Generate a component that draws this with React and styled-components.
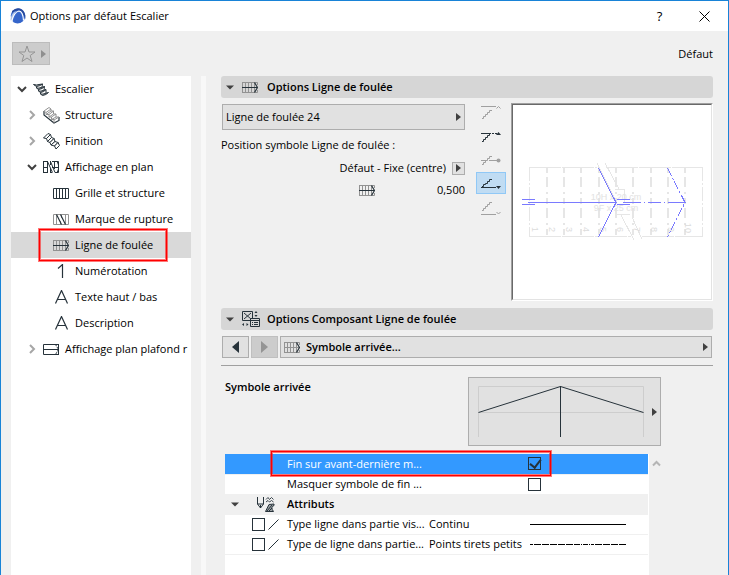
import { useState } from 'react';
import styled, { createGlobalStyle, css } from 'styled-components';

const GlobalStyle = createGlobalStyle`
  * { box-sizing: border-box; }
  body {
    margin: 0;
    background: #f0f0f0;
  }
  body, button, input, select {
    font-family: "Open Sans", "Noto Sans", sans-serif;
    font-size: 11px;
    line-height: 16px;
    color: #000;
  }
  button, input, select {
    margin: 0;
    padding: 0;
  }
  svg { display: block; flex: none; }
`;

const Dialog = styled.div`
  display: flex;
  flex-direction: column;
  min-height: 100vh;
  border: 1px solid #1883d7;
  border-bottom: none;
  background: #f0f0f0;
`;

const TitleBar = styled.header`
  display: flex;
  align-items: center;
  height: 30px;
  padding: 0 16px 0 9px;
  background: #fff;
`;

const Title = styled.h1`
  flex: 1;
  margin: 0 0 0 4px;
  font-size: 11px;
  font-weight: 400;
`;

const TitleButton = styled.button`
  display: flex;
  align-items: center;
  justify-content: center;
  width: 15px;
  height: 20px;
  margin-left: 30px;
  border: none;
  background: none;
  font-size: 13px;
`;

const Toolbar = styled.div`
  display: flex;
  align-items: center;
  justify-content: space-between;
  height: 45px;
  padding: 0 15px 0 11px;
`;

const FavoriteButton = styled.button`
  display: flex;
  align-items: center;
  justify-content: space-between;
  width: 38px;
  height: 23px;
  padding: 0 3px 0 5px;
  border: 1px solid #bcbcbc;
  background: #cccccc;
`;

const Main = styled.div`
  display: flex;
  flex: 1;
  padding: 0 15px 0 10px;
`;

const Sidebar = styled.nav`
  width: 180px;
  overflow: hidden;
  background: #fff;
`;

const Splitter = styled.div`
  width: 5px;
  margin: 0 15px 0 10px;
  background: #f8f8f8;
`;

const Tree = styled.ul`
  margin: 0;
  padding: 0;
  list-style: none;
`;

const TreeRow = styled.li`
  position: relative;
  height: 26px;
  padding-left: ${(p) => 6 + p.$level * 10}px;
  background: ${(p) => (p.$selected ? '#d9d9d9' : 'transparent')};
`;

const TreeButton = styled.button`
  display: flex;
  align-items: center;
  height: 26px;
  border: none;
  background: none;
  white-space: nowrap;
`;

const TreeCaret = styled.span`
  width: 16px;
`;

const TreeIcon = styled.span`
  display: flex;
  width: 22px;
`;

const Callout = styled.span`
  position: absolute;
  border: 1px solid #f00;
  box-shadow: 0 0 0 1px rgba(255, 30, 30, 0.6), inset 0 0 0 1px rgba(255, 30, 30, 0.6);
  pointer-events: none;
`;

const TreeCallout = styled(Callout)`
  z-index: 1;
  top: -3px;
  left: 28px;
  width: 128px;
  height: 32px;
`;

const RowCallout = styled(Callout)`
  top: -3px;
  left: 46px;
  width: 280px;
  height: 25px;
`;

const Content = styled.main`
  display: flex;
  flex: 1;
  flex-direction: column;
  min-width: 0;
`;

const SectionHeader = styled.h2`
  margin: 0;
  border-radius: 3px;
  background: #d6d6d6;
  font-size: 11px;
  font-weight: 600;
`;

const SectionToggle = styled.button`
  display: flex;
  align-items: center;
  width: 100%;
  height: 22px;
  padding-left: 5px;
  border: none;
  background: none;
  font-weight: inherit;
`;

const SectionIcon = styled.span`
  display: flex;
  width: 25px;
  margin-left: 8px;
`;

const LinePanel = styled.div`
  display: flex;
  padding: 5px 0 7px;
`;

const Settings = styled.div`
  display: flex;
  flex: 1;
  flex-direction: column;
  margin-right: 11px;
  min-width: 0;
`;

const DropDown = styled.div`
  display: flex;
  flex: ${(p) => (p.$tall ? 'none' : '1')};
  align-items: center;
  height: ${(p) => (p.$tall ? 26 : 22)}px;
  margin: ${(p) => (p.$tall ? '1px 0 0 1px' : '0')};
  padding: 0 3px;
  border: 1px solid #adadad;
  background: #e1e1e1;

  select {
    flex: 1;
    min-width: 0;
    border: none;
    background: none;
    appearance: none;
    outline: none;
    font-weight: ${(p) => (p.$tall ? 400 : 600)};
  }

  svg + select {
    padding-left: 6px;
  }
`;

const Caption = styled.p`
  margin: 7px 0;
`;

const SettingRow = styled.div`
  display: flex;
  align-items: center;
  justify-content: flex-end;
  height: 16px;
  margin-bottom: 6px;
`;

const MiniButton = styled.button`
  display: flex;
  align-items: center;
  justify-content: center;
  width: 13px;
  height: 13px;
  margin-left: 6px;
  border: 1px solid #adadad;
  background: #e1e1e1;
`;

const NumberField = styled.input`
  width: 90px;
  border: none;
  background: none;
  text-align: right;
`;

const PositionBar = styled.div`
  display: flex;
  flex-direction: column;
  gap: 2px;
  margin: -3px 5px 0 0;
`;

const PositionButton = styled.button`
  display: flex;
  align-items: center;
  justify-content: center;
  width: 30px;
  height: 22px;
  border: 1px solid transparent;
  background: none;
  color: ${(p) => (p.$dim ? '#a0a0a0' : '#26323a')};
  ${(p) =>
    p.$active &&
    css`
      border-color: #90c8f6;
      background: #c0dcf3;
    `}
`;

const Preview = styled.div`
  width: 202px;
  height: 198px;
  border: 1px solid;
  border-color: #a0a0a0 #fff #fff #a0a0a0;
  background: #fff;

  svg {
    width: 200px;
    height: 196px;
    border: 1px solid;
    border-color: #696969 #e3e3e3 #e3e3e3 #696969;
  }
`;

const Pager = styled.div`
  display: flex;
  gap: 2px;
  padding: 6px 1px 7px;
  border-bottom: 1px solid #a0a0a0;
`;

const PagerButton = styled.button`
  display: flex;
  align-items: center;
  justify-content: center;
  width: 27px;
  height: 22px;
  border: 1px solid #adadad;
  background: #e1e1e1;
  color: #26323a;

  &:disabled {
    border-color: #bfbfbf;
    background: #cccccc;
    color: #949494;
  }
`;

const SymbolRow = styled.div`
  display: flex;
  justify-content: space-between;
  padding: 11px 52px 8px 4px;
`;

const SymbolTitle = styled.h3`
  margin: 2px 0;
  font-size: 11px;
  font-weight: 600;
`;

const SymbolButton = styled.button`
  display: flex;
  align-items: center;
  justify-content: space-between;
  width: 193px;
  height: 69px;
  padding: 0 3px 0 9px;
  border: 1px solid #adadad;
  background: #e1e1e1;
`;

const ListArea = styled.div`
  display: flex;
  flex: 1;
  padding-left: 4px;
`;

const List = styled.div`
  position: relative;
  flex: 1;
  padding-right: 1px;
  background: #fff;
`;

const ScrollTrack = styled.div`
  width: 64px;
  padding: 6px 0 0 3px;
`;

const Properties = styled.table`
  width: 100%;
  table-layout: fixed;
  border-collapse: collapse;

  td, th {
    height: 20px;
    padding: 0;
    border-bottom: 1px solid #f0f0f0;
    font-weight: 400;
    line-height: 16px;
    text-align: left;
    white-space: nowrap;
  }
`;

const PropertyRow = styled.tr`
  background: ${(p) => (p.$selected ? '#3399ff' : p.$group ? '#f0f0f0' : '#fff')};

  th {
    color: ${(p) => (p.$selected ? '#fff' : '#000')};
  }
`;

const GroupHeading = styled.th`
  && {
    font-weight: 600;
  }
`;

const Gutter = styled.div`
  display: flex;
  align-items: center;
  justify-content: ${(p) => (p.$group ? 'space-between' : 'flex-end')};
  gap: 3px;
  padding: ${(p) => (p.$group ? '0 12px 0 6px' : '0 8px 0 0')};
`;

const Check = styled.input`
  display: block;
  width: 13px;
  height: 13px;
  border: 1px solid #26323a;
  background: ${(p) => (p.$clear ? 'transparent' : '#fff')};
  appearance: none;

  &:checked::after {
    content: "";
    display: block;
    width: 5px;
    height: 9px;
    margin: -1px 0 0 3px;
    border: solid #26323a;
    border-width: 0 2px 2px 0;
    transform: rotate(38deg);
  }
`;

const LineSample = styled.svg`
  margin-left: 2px;
`;

const Triangle = ({ color = '#404040', size = 8, left }) => (
  <svg width={size / 2 + 1} height={size} viewBox={`0 0 ${size / 2 + 1} ${size}`}>
    <path d={left ? `M${size / 2 + 1} 0V${size}L0 ${size / 2}Z` : `M0 0V${size}L${size / 2 + 1} ${size / 2}Z`} fill={color} />
  </svg>
);

const DownTriangle = () => (
  <svg width="8" height="5" viewBox="0 0 8 5">
    <path d="M0 0.500H8L4 4.500Z" fill="#404040" />
  </svg>
);

const Chevron = ({ open }) => (
  <svg width="10" height="10" viewBox="0 0 10 10" fill="none" strokeWidth="2">
    {open ? <path d="M1 3L5 7L9 3" stroke="#404040" /> : <path d="M3 1L7 5L3 9" stroke="#a6a6a6" />}
  </svg>
);

const Logo = () => (
  <svg width="16" height="16" viewBox="0 0 16 16">
    <circle cx="8" cy="7.800" r="7.300" fill="#3f6fd0" />
    <path d="M2 3Q7-1.500 12 1.500Q16 5 15.300 11Q13 4 9 2.500Q5 2 2 5Z" fill="#274a9e" />
    <path d="M0.500 12Q1 5 6 3Q3 7 2.500 14Z" fill="#a9bfe8" />
    <path d="M1.500 13.500Q4.500 3.500 9 3Q13 3.500 13.500 12.500" fill="none" stroke="#fff" strokeWidth="1.200" />
    <path d="M3 14Q5.500 5 9 4.500Q12 6 12.500 13.500Q8 17 3 14Z" fill="#3565ca" />
  </svg>
);

const StarIcon = () => (
  <svg width="18" height="18" viewBox="0 0 18 18" fill="none" stroke="#959595">
    <path d="M9 1L11 7H17L12.200 10.500L14 16.500L9 13L4 16.500L5.800 10.500L1 7H7Z" />
  </svg>
);

const StairIcon = () => (
  <svg width="16" height="13" viewBox="0 0 16 13" stroke="#26323a" fill="#a9afb3">
    <path d="M0.500 1.500Q4 2.500 6 1.500L9.500 1Q7 3 3.500 3.500Z" />
    <path d="M3.500 5Q6 5.500 8 4.500L11.500 3.500Q9.500 6 5.500 6.500Z" />
    <path d="M5.500 8Q8 8.500 10 7.500L13 6.500Q11 9 7.500 9.500Z" />
    <path d="M7.500 11Q10 11.500 12 10.500L15.500 9.500Q13 12 9.500 12.500Z" />
    <path d="M3.500 3.500V5M5.500 6.500V8M7.500 9.500V11M9.500 1L9 4M11.500 3.500L11 7M13 6.500V10" />
  </svg>
);

const StructureIcon = () => (
  <svg width="17" height="17" viewBox="0 0 17 17" fill="none">
    <path d="M1 4V8L11 16L16 13.500V10" stroke="#26323a" strokeWidth="1.200" />
    <path d="M1 4L6 0.500L8 2V4L10.500 4V7L13 7V10H16L11 13V16M1 4L3 5.500V7.500H6V10H8.500V12.500H11M3 5.500L8 2M3 7.500L8 4M6 7.500L10.500 4M6 10L10.500 7M8.500 10L13 7M8.500 12.500L13 10" stroke="#929292" />
  </svg>
);

const FinishIcon = () => (
  <svg width="17" height="17" viewBox="0 0 17 17" fill="#fff" stroke="#26323a">
    <path d="M0.500 5L5 0.500L7.500 1.500L3.500 5.500Z" />
    <path d="M3.500 5.500L7.500 1.500L8.500 4.500L4.500 8.500Z" />
    <path d="M4.500 8.500L8.500 4.500L11 5.500L7 9.500Z" />
    <path d="M7 9.500L11 5.500L12 8.500L8 12Z" />
    <path d="M8 12L12 8.500L15 9.500L11.500 13Z" />
    <path d="M11.500 13L15 9.500L16.500 12.500L13 16Z" />
  </svg>
);

const PlanIcon = () => (
  <svg width="16" height="12" viewBox="0 0 16 12" fill="none" stroke="#26323a">
    <path d="M0.500 0.500H5M0.500 11.500H5M0.500 0V12M4.500 0V12M0.500 6.500H5M4.500 0.500L9.500 11.500M7.500 0V4M7.500 0.500L12 11.500M7 11.500H9M7.500 11V7M9 0.500H15.500V11.500H12M11.500 0V8M9 6.500H15.500M15.500 4L14 0M15.500 8L14 12" />
  </svg>
);

const GridIcon = () => (
  <svg width="16" height="11" viewBox="0 0 16 11" fill="none" stroke="#26323a">
    <path d="M0.500 0.500H15.500V10.500H0.500ZM3.500 0V11M6.500 0V11M9.500 0V11M12.500 0V11" />
  </svg>
);

const BreakIcon = () => (
  <svg width="16" height="11" viewBox="0 0 16 11" fill="none">
    <path d="M0.500 0.500H15.500V10.500H0.500ZM3.500 0V11M8.500 0V4M7.500 7V11M12.500 0V11" stroke="#929292" />
    <path d="M3.500 0.500L8.500 10.500M7.500 0.500L12.500 10.500" stroke="#26323a" strokeWidth="1.200" />
  </svg>
);

const WalkIcon = ({ end }) => (
  <svg width="16" height="11" viewBox="0 0 16 11" fill="none">
    <path d="M0.500 0.500H15.500V3M0.500 10.500H15.500V8M0.500 0V11M3.500 0V11M6.500 0V11M9.500 0V11M12.500 0V11" stroke="#929292" />
    <path d="M0 5.500H15" stroke={end ? '#929292' : '#26323a'} />
    <path d="M12.500 0.500L15.500 5.500L12.500 10.500" stroke="#26323a" strokeWidth="1.200" />
  </svg>
);

const NumberIcon = () => (
  <svg width="16" height="14" viewBox="0 0 16 14" fill="none" stroke="#26323a" strokeWidth="1.200">
    <path d="M5 4.500L9.500 0.500V14" />
  </svg>
);

const LetterIcon = () => (
  <svg width="16" height="14" viewBox="0 0 16 14" fill="none" stroke="#26323a" strokeWidth="1.200">
    <path d="M2.500 13.500L8.500 0.500L14.500 13.500M4.500 9.500H12.500" />
  </svg>
);

const CeilingIcon = () => (
  <svg width="16" height="11" viewBox="0 0 16 11" fill="none" stroke="#26323a">
    <path d="M15.500 0.500H0.500V10.500H15.500M0 5.500H15M15.500 0V11" />
    <path d="M12.500 0.500L15.500 5.500L12.500 10.500" strokeDasharray="2 1" />
  </svg>
);

const ComponentIcon = () => (
  <svg width="19" height="16" viewBox="0 0 19 16" fill="none" stroke="#26323a">
    <path d="M0.500 0.500H10.500V9.500H0.500ZM2 2L9 8M9 2L2 8" />
    <path d="M8.500 7.500H17.500V15.500H8.500Z" fill="#d6d6d6" />
    <path d="M8.500 9.500H17.500M10 11.500H11M12 11.500H16M10 13.500H11M12 13.500H16" />
    <path d="M12.500 2L14 0L15.500 2ZM12.500 4L14 6L15.500 4ZM2 12L0 13.500L2 15ZM4.500 12L6.500 13.500L4.500 15Z" fill="#26323a" stroke="none" />
  </svg>
);

const AttributesIcon = () => (
  <svg width="19" height="17" viewBox="0 0 19 17" fill="none" stroke="#26323a">
    <path d="M1.500 1V8L4.500 12L7.500 8V1M1.500 8H7.500M4.500 9V12" />
    <path d="M10 3.500L12 1.500L13.500 3.500L15.500 1.500L17.500 3.500M10 6L12 4.500L13.500 6L15.500 4.500L17.500 6" strokeWidth="0.900" />
    <path d="M9.500 15.500L13 8.500L18 8V9.500Q14 11 17.500 15.500Z" fill="#9ba1a5" />
    <path d="M11 15L16 9M13 15L16 12" />
  </svg>
);

const SlashIcon = () => (
  <svg width="11" height="11" viewBox="0 0 11 11" stroke="#26323a">
    <path d="M0.500 10.500L10.500 0.500" />
  </svg>
);

const POSITIONS = [
  {
    id: 'top', label: 'Au-dessus', dim: true,
    art: <><path d="M0 4.500H15M1 16.500H2.500V14.500H4.500V12.500H6.500V10.500H8.500V8.500H11" /><path d="M15.500 6.500L17.500 4.500L19.500 6.500" /></>,
  },
  {
    id: 'upper', label: 'Haut',
    art: <><path d="M0 7.500H10M11 7.500H13M14 7.500H16M1 15.500H2.500V13.500H4.500V11.500H6.500V9.500H8.500V7.500" /><path d="M15 9L17.500 6L20 9Z" fill="currentColor" stroke="none" /></>,
  },
  {
    id: 'middle', label: 'Milieu', dim: true,
    art: <><path d="M0 10.500H5M8 10.500H16M1 14.500H2.500V12.500H4.500V10.500H6.500V8.500H8.500V6.500H11" /><circle cx="17.500" cy="10.500" r="2" fill="currentColor" stroke="none" /></>,
  },
  {
    id: 'lower', label: 'Bas',
    art: <><path d="M0 13.500H15M1 12.500H2.500V10.500H4.500V9.500H6.500V7.500H8.500V5.500H11" /><path d="M15 12H20L17.500 15Z" fill="currentColor" stroke="none" /></>,
  },
  {
    id: 'bottom', label: 'Au-dessous', dim: true,
    art: <><path d="M0 16.500H15M1 12.500H2.500V10.500H4.500V8.500H6.500V6.500H8.500V4.500H11" /><path d="M15.500 14L17.500 16L19.500 14" /></>,
  },
];

const TREE = [
  { label: 'Escalier', level: 0, icon: <StairIcon />, open: true },
  { label: 'Structure', level: 1, icon: <StructureIcon />, open: false },
  { label: 'Finition', level: 1, icon: <FinishIcon />, open: false },
  { label: 'Affichage en plan', level: 1, icon: <PlanIcon />, open: true },
  { label: 'Grille et structure', level: 2, icon: <GridIcon /> },
  { label: 'Marque de rupture', level: 2, icon: <BreakIcon /> },
  { label: 'Ligne de foulée', level: 2, icon: <WalkIcon /> },
  { label: 'Numérotation', level: 2, icon: <NumberIcon /> },
  { label: 'Texte haut / bas', level: 2, icon: <LetterIcon /> },
  { label: 'Description', level: 2, icon: <LetterIcon /> },
  { label: 'Affichage plan plafond r', level: 1, icon: <CeilingIcon />, open: false },
];

const LINE_TYPES = [
  { label: 'Type ligne dans partie vis...', value: 'Continu', dash: 'none' },
  { label: 'Type de ligne dans partie...', value: 'Points tirets petits', dash: '3 1 7 1 7 1 7 1 7 1 7 1 6 1 1 1 5 1 1 1' },
];

const TREADS = [34, 51, 68, 86, 103, 120, 138, 155, 172];

const StairPreview = () => (
  <svg viewBox="0 0 198 194" fill="none" role="img" aria-label="Aperçu de la ligne de foulée">
    <g stroke="#e6e6e6" shapeRendering="crispEdges">
      <path d="M16 62.500H84M93 62.500H190M16 131.500H118M129 131.500H190" strokeDasharray="32 1" />
      <path d="M16.500 62V132M189.500 62V132" strokeDasharray="14 2 2 2" />
      {TREADS.map((x) => (
        <path key={x} d={`M${x} 62V132`} strokeWidth="2" strokeDasharray="6 4 10 5 2 4" />
      ))}
      <path d="M84 58L104 98M92 58L106 84M102 84.500H111V98M102 109.500H117M108 110L121 135M119 112L129 134" />
    </g>
    <g fill="#e2e2e2" fontFamily="Liberation Sans, sans-serif" fontSize="9" textAnchor="middle">
      <text x="103" y="95">10H x 20 cm</text>
      <text x="103" y="106">9F x 25 cm</text>
    </g>
    <g fill="#dcdcdc" fontFamily="Liberation Sans, sans-serif" fontSize="9">
      {[1, 2, 3, 4, 5, 6, 7, 8, 9, 10].map((n) => (
        <text key={n} transform={`translate(${2 + n * 17} ${n === 10 ? 118 : 122}) rotate(90)`}>{n}</text>
      ))}
    </g>
    <g stroke="#7a7aff" shapeRendering="crispEdges">
      <path d="M15 97.500H103M9 94.500H22M9 99.500H22M104 94.500H117M104 99.500H117" />
      <path d="M85.500 63L103 97.500L85.500 132" />
      <path d="M110 97.500H172" strokeDasharray="18 3 1 3 13 3 1 3" />
      <path d="M154.500 63L172 97.500L154.500 132" strokeDasharray="9 2 2 2" />
    </g>
  </svg>
);

function App() {
  const [selected, setSelected] = useState('Ligne de foulée');
  const [position, setPosition] = useState('lower');
  const [endBefore, setEndBefore] = useState(true);
  const [hideEnd, setHideEnd] = useState(false);

  return (
    <Dialog role="dialog" aria-labelledby="dialog-title">
      <GlobalStyle />
      <TitleBar>
        <Logo />
        <Title id="dialog-title">Options par défaut Escalier</Title>
        <TitleButton aria-label="Aide">?</TitleButton>
        <TitleButton aria-label="Fermer">
          <svg width="11" height="11" viewBox="0 0 11 11" stroke="#000">
            <path d="M0.500 0.500L10.500 10.500M10.500 0.500L0.500 10.500" />
          </svg>
        </TitleButton>
      </TitleBar>
      <Toolbar>
        <FavoriteButton aria-label="Favoris">
          <StarIcon />
          <Triangle color="#8f8f8f" />
        </FavoriteButton>
        <span>Défaut</span>
      </Toolbar>
      <Main>
        <Sidebar>
          <Tree>
            {TREE.map((item) => (
              <TreeRow key={item.label} $level={item.level} $selected={item.label === selected}>
                <TreeButton onClick={() => setSelected(item.label)}>
                  <TreeCaret>{item.open !== undefined && <Chevron open={item.open} />}</TreeCaret>
                  <TreeIcon>{item.icon}</TreeIcon>
                  {item.label}
                </TreeButton>
                {item.label === 'Ligne de foulée' && <TreeCallout />}
              </TreeRow>
            ))}
          </Tree>
        </Sidebar>
        <Splitter />
        <Content>
          <SectionHeader>
            <SectionToggle>
              <DownTriangle />
              <SectionIcon><WalkIcon /></SectionIcon>
              Options Ligne de foulée
            </SectionToggle>
          </SectionHeader>
          <LinePanel>
            <Settings>
              <DropDown $tall>
                <select aria-label="Type de ligne de foulée">
                  <option>Ligne de foulée 24</option>
                </select>
                <Triangle />
              </DropDown>
              <Caption>Position symbole Ligne de foulée :</Caption>
              <SettingRow>
                Défaut - Fixe (centre)
                <MiniButton aria-label="Choisir la position"><Triangle /></MiniButton>
              </SettingRow>
              <SettingRow>
                <WalkIcon />
                <NumberField aria-label="Position" defaultValue="0,500" />
              </SettingRow>
            </Settings>
            <PositionBar>
              {POSITIONS.map((p) => (
                <PositionButton
                  key={p.id}
                  aria-label={p.label}
                  $dim={p.dim}
                  $active={position === p.id}
                  onClick={() => setPosition(p.id)}
                >
                  <svg width="20" height="18" viewBox="0 0 20 18" fill="none" stroke="currentColor">{p.art}</svg>
                </PositionButton>
              ))}
            </PositionBar>
            <Preview><StairPreview /></Preview>
          </LinePanel>
          <SectionHeader>
            <SectionToggle>
              <DownTriangle />
              <SectionIcon><ComponentIcon /></SectionIcon>
              Options Composant Ligne de foulée
            </SectionToggle>
          </SectionHeader>
          <Pager>
            <PagerButton aria-label="Précédent"><Triangle left size={12} color="#26323a" /></PagerButton>
            <PagerButton aria-label="Suivant" disabled><Triangle size={12} color="#949494" /></PagerButton>
            <DropDown>
              <WalkIcon end />
              <select aria-label="Composant">
                <option>Symbole arrivée...</option>
              </select>
              <Triangle />
            </DropDown>
          </Pager>
          <SymbolRow>
            <SymbolTitle>Symbole arrivée</SymbolTitle>
            <SymbolButton aria-label="Choisir le symbole d'arrivée">
              <svg width="166" height="51" viewBox="0 0 166 51" fill="none">
                <path d="M0.500 51V0.500H165.500V51M0 26.500H166" stroke="#cdcdcd" />
                <path d="M0.500 26.500L82.500 0.500L165.500 26.500M82.500 0V51" stroke="#26323a" />
              </svg>
              <Triangle />
            </SymbolButton>
          </SymbolRow>
          <ListArea>
            <List>
              <Properties>
                <colgroup>
                  <col width="62" />
                  <col width="142" />
                  <col width="99" />
                  <col />
                </colgroup>
                <tbody>
                  <PropertyRow $selected>
                    <td />
                    <th scope="row"><label htmlFor="end-before">Fin sur avant-dernière m...</label></th>
                    <td />
                    <td><Check $clear type="checkbox" id="end-before" checked={endBefore} onChange={(e) => setEndBefore(e.target.checked)} /></td>
                  </PropertyRow>
                  <PropertyRow>
                    <td />
                    <th scope="row"><label htmlFor="hide-end">Masquer symbole de fin ...</label></th>
                    <td />
                    <td><Check type="checkbox" id="hide-end" checked={hideEnd} onChange={(e) => setHideEnd(e.target.checked)} /></td>
                  </PropertyRow>
                  <PropertyRow $group>
                    <td><Gutter $group><DownTriangle /><AttributesIcon /></Gutter></td>
                    <GroupHeading colSpan="3">Attributs</GroupHeading>
                  </PropertyRow>
                  {LINE_TYPES.map((t, i) => (
                    <PropertyRow key={t.label}>
                      <td><Gutter><Check type="checkbox" id={`line-${i}`} /><SlashIcon /></Gutter></td>
                      <th scope="row"><label htmlFor={`line-${i}`}>{t.label}</label></th>
                      <td>{t.value}</td>
                      <td>
                        <LineSample width="96" height="1" viewBox="0 0 96 1">
                          <path d="M0 0.500H96" stroke="#000" strokeDasharray={t.dash} />
                        </LineSample>
                      </td>
                    </PropertyRow>
                  ))}
                </tbody>
              </Properties>
              <RowCallout />
            </List>
            <ScrollTrack>
              <svg width="9" height="7" viewBox="0 0 9 7" fill="none" stroke="#b5b5b5" strokeWidth="2">
                <path d="M1 5.500L4.500 2L8 5.500" />
              </svg>
            </ScrollTrack>
          </ListArea>
        </Content>
      </Main>
    </Dialog>
  );
}

export default App;
